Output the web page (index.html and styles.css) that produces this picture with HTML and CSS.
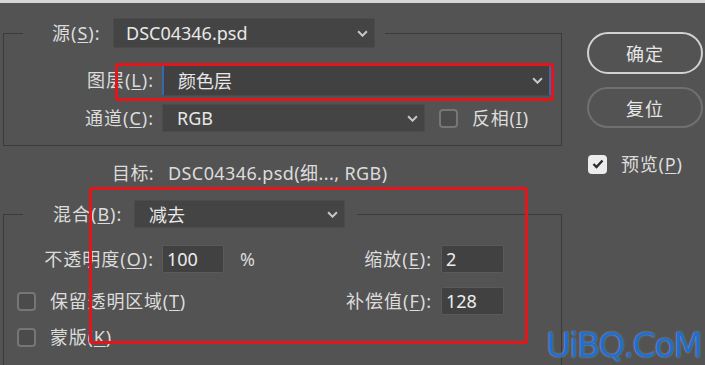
FILE: index.html
```html
<!DOCTYPE html>
<html lang="zh-CN">
<head>
    <meta charset="UTF-8">
    <meta name="viewport" content="width=device-width, initial-scale=1.0">
    <title>应用图像</title>
    <link rel="stylesheet" href="styles.css">
</head>
<body>
    <div class="dialog">
        <div class="main">
            <fieldset class="group group-source">
                <legend class="legend legend-source">
                    <span class="label">源(<u>S</u>):</span>
                    <div class="select select-source">
                        <span>DSC04346.psd</span>
                        <svg class="chevron" viewBox="0 0 10 6"><polyline points="1,1 5,5 9,1"/></svg>
                    </div>
                </legend>
                <div class="row">
                    <span class="label row-label">图层(<u>L</u>):</span>
                    <div class="select select-layer">
                        <span>颜色层</span>
                        <svg class="chevron" viewBox="0 0 10 6"><polyline points="1,1 5,5 9,1"/></svg>
                    </div>
                </div>
                <div class="row">
                    <span class="label row-label">通道(<u>C</u>):</span>
                    <div class="select select-channel">
                        <span>RGB</span>
                        <svg class="chevron" viewBox="0 0 10 6"><polyline points="1,1 5,5 9,1"/></svg>
                    </div>
                    <div class="check check-invert">
                        <span class="box"></span>
                        <span class="label">反相(<u>I</u>)</span>
                    </div>
                </div>
            </fieldset>

            <div class="target">
                <span class="label">目标:</span>
                <span class="label">DSC04346.psd(细..., RGB)</span>
            </div>

            <fieldset class="group group-blend">
                <legend class="legend legend-blend">
                    <span class="label">混合(<u>B</u>):</span>
                    <div class="select select-blend">
                        <span>减去</span>
                        <svg class="chevron" viewBox="0 0 10 6"><polyline points="1,1 5,5 9,1"/></svg>
                    </div>
                </legend>
                <div class="row row-opacity">
                    <span class="label row-label">不透明度(<u>O</u>):</span>
                    <div class="input input-opacity">100</div>
                    <span class="label unit">%</span>
                    <div class="field-right">
                        <span class="label">缩放(<u>E</u>):</span>
                        <div class="input">2</div>
                    </div>
                </div>
                <div class="row row-offset">
                    <div class="check">
                        <span class="box"></span>
                        <span class="label">保留透明区域(<u>T</u>)</span>
                    </div>
                    <div class="field-right">
                        <span class="label">补偿值(<u>F</u>):</span>
                        <div class="input">128</div>
                    </div>
                </div>
                <div class="row row-mask">
                    <div class="check">
                        <span class="box"></span>
                        <span class="label">蒙版(<u>K</u>)</span>
                    </div>
                </div>
            </fieldset>
        </div>

        <div class="side">
            <div class="btn btn-primary">确定</div>
            <div class="btn btn-reset">复位</div>
            <div class="check check-preview">
                <span class="box checked">
                    <svg viewBox="0 0 12 10"><polyline points="1.5,5 4.5,8 10.5,1.5"/></svg>
                </span>
                <span class="label">预览(<u>P</u>)</span>
            </div>
        </div>
    </div>

    <div class="mark mark-layer"></div>
    <div class="mark mark-blend"></div>
    <div class="watermark">UiBQ.CoM</div>
</body>
</html>
```

FILE: styles.css
```css
* {
    box-sizing: border-box;
    margin: 0;
    padding: 0;
}

html, body {
    width: 705px;
    height: 365px;
    overflow: hidden;
}

body {
    position: relative;
    background-color: #535353;
    border-top: 3px solid #d6d6d6;
    font-family: "Noto Sans", "Noto Sans CJK SC", sans-serif;
    font-size: 18px;
    color: #dcdcdc;
}

u {
    text-underline-offset: 2px;
    text-decoration-thickness: 1px;
}

.dialog {
    display: flex;
}

.main {
    width: 565px;
}

.label {
    white-space: nowrap;
    line-height: 20px;
    letter-spacing: 1px;
}

/* group boxes */

.group {
    margin-left: 3px;
    width: 559px;
    border: 1px solid #3b3b3b;
    padding: 0;
}

.group-source {
    margin-top: 15px;
    padding-top: 17px;
    padding-bottom: 12px;
}

.group-blend {
    margin-top: 17px;
    padding-top: 18px;
    height: 165px;
    border-bottom: none;
}

.legend {
    display: flex;
    align-items: center;
    margin-left: 19px;
}

.legend-source {
    padding: 0 10px 0 29px;
}

.legend-source .label {
    width: 51px;
}

.legend-source .select {
    margin-left: 10px;
    width: 262px;
    height: 30px;
    padding-left: 12px;
}

.legend-blend {
    padding: 0 12px 0 30px;
}

.legend-blend .label {
    width: 71px;
}

.legend-blend .select {
    margin-left: 10px;
    width: 211px;
    height: 28px;
}

.row {
    display: flex;
    align-items: center;
    height: 30px;
}

.row + .row {
    margin-top: 8px;
}

.row-label {
    width: 150px;
    text-align: right;
    margin-right: 8px;
}

/* dropdowns */

.select {
    display: flex;
    align-items: center;
    justify-content: space-between;
    background: #444444;
    border: 1px solid #4b4b4b;
    border-radius: 2px;
    padding: 0 6px 0 14px;
    color: #e8e8e8;
    white-space: nowrap;
}

.select-layer {
    width: 389px;
    height: 32px;
    background: #414141;
    border-left: 2px solid #3569ad;
    border-right: 2px solid #3569ad;
}

.select-channel {
    width: 263px;
    height: 28px;
}

.chevron {
    width: 11px;
    height: 7px;
    fill: none;
    stroke: #c8c8c8;
    stroke-width: 1.8;
}

/* checkboxes */

.check {
    display: flex;
    align-items: center;
}

.check .label {
    letter-spacing: 0.8px;
}

.box {
    display: flex;
    align-items: center;
    justify-content: center;
    width: 19px;
    height: 19px;
    border: 2px solid #767676;
    border-radius: 4px;
    background: #4b4b4b;
    margin-right: 14px;
}

.box.checked {
    background: #ececec;
    border-color: #ececec;
}

.box svg {
    width: 12px;
    height: 10px;
    fill: none;
    stroke: #2b2b2b;
    stroke-width: 2.4;
}

.check-invert {
    margin-left: 14px;
}

/* target line */

.target {
    display: flex;
    gap: 14px;
    margin-top: 17px;
    padding-left: 112px;
}

.target .label {
    letter-spacing: 0.4px;
}

/* blend group rows */

.input {
    width: 63px;
    height: 28px;
    background: #414141;
    border: 1px solid #5a5a5a;
    border-radius: 2px;
    padding-left: 4px;
    line-height: 26px;
    color: #ececec;
}

.input-opacity {
    width: 62px;
}

.unit {
    margin-left: 16px;
}

.field-right {
    display: flex;
    align-items: center;
    margin-left: auto;
    margin-right: 57px;
}

.field-right .label {
    margin-right: 9px;
}

.row-opacity {
    margin-top: -2px;
}

.row-offset {
    margin-top: 12px !important;
}

.row-offset .check,
.row-mask .check {
    margin-left: 13px;
}

.row-mask {
    margin-top: 6px !important;
}

/* right side */

.side {
    margin-left: 22px;
    width: 116px;
    padding-top: 29px;
}

.btn {
    height: 42px;
    border: 2px solid #d2d2d2;
    border-radius: 21px;
    display: flex;
    align-items: center;
    justify-content: center;
    color: #e6e6e6;
    letter-spacing: 1px;
}

.btn-reset {
    margin-top: 13px;
    height: 41px;
    border-color: #707070;
}

.check-preview {
    margin-top: 26px;
    margin-left: 1px;
}

/* annotations */

.mark {
    position: absolute;
    border: 3px solid #e3161c;
    border-radius: 3px;
}

.mark-layer {
    left: 115px;
    top: 60px;
    width: 439px;
    height: 38px;
}

.mark-blend {
    left: 89px;
    top: 184px;
    width: 439px;
    height: 157px;
}

.watermark {
    position: absolute;
    left: 546px;
    top: 322px;
    font-family: "DejaVu Sans", sans-serif;
    font-size: 34px;
    line-height: normal;
    letter-spacing: -1.8px;
    color: #1d6fd4;
    text-shadow: 0 0 2px rgba(255, 255, 255, 0.45);
}
```
